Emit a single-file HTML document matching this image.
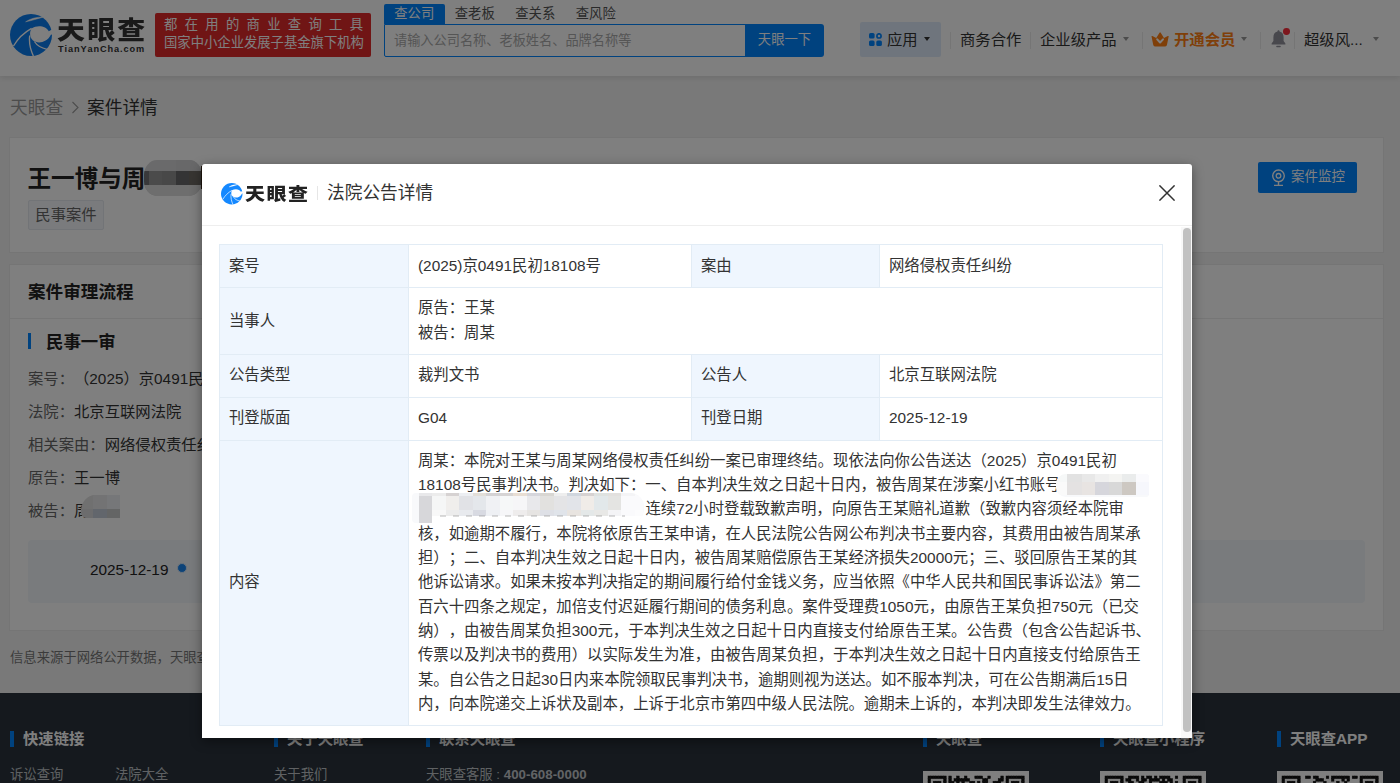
<!DOCTYPE html>
<html lang="zh-CN">
<head>
<meta charset="utf-8">
<title>案件详情 - 天眼查</title>
<style>
*{box-sizing:border-box;margin:0;padding:0}
html,body{width:1400px;height:783px;overflow:hidden;background:#f3f3f3}
body{font-family:"Liberation Sans","Noto Sans CJK SC",sans-serif;color:#333;font-size:14px;position:relative;text-spacing-trim:space-all;font-kerning:none}
.abs{position:absolute;white-space:nowrap}
/* ---------- page header ---------- */
#hd{position:absolute;left:0;top:0;width:1400px;height:76px;background:#fff;box-shadow:0 2px 6px rgba(0,0,0,.10)}
#logo-ico{position:absolute;left:10px;top:14px;width:42px;height:42px}
#logo-cn{left:57px;top:10.5px;font-size:27.5px;font-weight:900;color:#333;letter-spacing:2.2px;line-height:40px;transform:scale(1.015,.9);transform-origin:0 50%}
#logo-en{left:58px;top:42px;font-size:9.2px;font-weight:700;color:#333;letter-spacing:.9px;line-height:14px}
#banner{position:absolute;left:155px;top:13px;width:216px;height:44px;background:#e02a2a;border-radius:2px;color:#fff;font-size:13.33px;line-height:18px;padding:3px 0 0 9px;white-space:nowrap}
#banner .l1{letter-spacing:7.3px}
#tabs{position:absolute;left:384px;top:4px;height:20px;font-size:13.33px;line-height:19px;white-space:nowrap;color:#555}
#tabs span{display:inline-block;height:20px;width:60.5px;text-align:center;vertical-align:top}
#tabs .on{background:#0084ff;color:#fff;border-radius:2px 2px 0 0}
#search{position:absolute;left:384px;top:24px;width:362px;height:33px;border:1px solid #0084ff;border-radius:0 0 0 2px;font-size:13.2px;line-height:32px;color:#aaa;padding-left:9px;white-space:nowrap}
#sbtn{position:absolute;left:745px;top:24px;width:79px;height:32.5px;background:#0084ff;color:#fff;font-size:13.33px;line-height:31px;text-align:center;border-radius:0 3px 3px 0}
#app{position:absolute;left:860px;top:22px;width:81px;height:35px;background:#dfebfa;border-radius:2px}
.nav{top:30px;font-size:15.33px;line-height:20px;color:#333}
.caret{position:absolute;width:0;height:0;border-left:3.5px solid transparent;border-right:3.5px solid transparent;border-top:4px solid #666}
.vsep{position:absolute;top:32px;width:1px;height:17px;background:#eaeaea}
/* ---------- page content ---------- */
.crumb{left:10px;top:94.5px;font-size:17.7px;line-height:26px;color:#999}
.card{position:absolute;background:#fff;border:1px solid #ebebeb}
#title{left:27.5px;top:160.5px;font-size:23.6px;font-weight:700;line-height:36px;color:#222}
#tag{position:absolute;left:28px;top:200px;width:76px;height:30px;border:1px solid #e4e8ee;background:#f4f6fa;border-radius:2px;font-size:15.33px;line-height:27px;text-align:center;color:#666}
#mon{position:absolute;left:1258px;top:162px;width:99px;height:31px;background:#0084ff;border-radius:2px;color:#fff;font-size:13.5px;line-height:30px;padding-left:33px;white-space:nowrap}
.info{left:28px;font-size:15.33px;line-height:20px;color:#666}
.info b{font-weight:400;color:#333}
#tl{position:absolute;left:28px;top:540px;width:1337px;height:63px;background:#f3f6fa;border-radius:4px}
/* ---------- footer ---------- */
#ft{position:absolute;left:0;top:693px;width:1400px;height:90px;background:#2b333c}
.fh{top:729px;font-size:15.33px;font-weight:700;line-height:20px;color:#fff}
.fbar{position:absolute;top:731px;width:4px;height:16px;background:#0084ff}
.fl{top:766px;font-size:13.33px;line-height:18px;color:#bfc3c7}
/* ---------- overlay + modal ---------- */
#mask{position:absolute;left:0;top:0;width:1400px;height:783px;background:rgba(0,0,0,.5)}
#modal{position:absolute;left:202px;top:164px;width:990px;height:574px;background:#fff;border-radius:3px 3px 0 0;box-shadow:0 3px 12px rgba(0,0,0,.42)}
#mh{position:absolute;left:0;top:0;width:990px;height:62px;border-bottom:1px solid #eee}
#m-ico{position:absolute;left:19px;top:19px;width:21.5px;height:21.5px}
#m-logo{left:43px;top:16px;font-size:20px;font-weight:900;line-height:28px;color:#222;letter-spacing:1.5px;transform:scaleY(.88);transform-origin:0 50%}
#m-sep{position:absolute;left:115px;top:22px;width:1px;height:14px;background:#e6e6e6}
#m-title{left:125px;top:16px;font-size:17.7px;line-height:26px;color:#333}
#m-x{position:absolute;left:957px;top:21px;width:16px;height:16px}
#sbt{position:absolute;left:979px;top:63px;width:11px;height:511px;background:#f8f8f8}
#sb{position:absolute;left:981px;top:64px;width:7.5px;height:504px;background:#c1c1c1;border-radius:4px}
table{position:absolute;left:17px;top:80px;width:944px;border-collapse:collapse;table-layout:fixed;font-size:15.385px;color:#333;white-space:nowrap}
td{border:1px solid #e2ecf5;padding:0 9px;vertical-align:middle;line-height:24.3px}
td.k{background:#eff6fe}
.mzb{filter:blur(.45px)}
</style>
</head>
<body>

<!-- ================= header ================= -->
<div id="hd">
  <svg id="logo-ico" viewBox="0 0 42 42">
    <circle cx="21" cy="21" r="21" fill="#0a7cee"/>
    <path d="M38.7 17.2 C36.5 12.4 28 10.4 21.5 14.4 C19.4 18 19.4 23 23 26.6 C28 30.2 37 28.6 40.9 20.8 L44 20 L42 15.5 Z" fill="#fff"/>
    <path d="M15.6 7.8 C21 4.3 27 2.9 33 3.2 C27.5 4.6 22 6.6 15.6 7.8 Z" fill="#fff" stroke="#fff" stroke-width=".5"/>
    <path d="M21.6 14.3 C14 18.5 7.5 25 3.5 32" fill="none" stroke="#fff" stroke-width="1.35"/>
    <path d="M19.7 21.5 C18.8 29 20.5 36 23.4 42" fill="none" stroke="#fff" stroke-width="1.35"/>
    <path d="M24.4 27.5 C27 31.6 31 34 37 35.3" fill="none" stroke="#fff" stroke-width="1.35"/>
  </svg>
  <div class="abs" id="logo-cn">天眼查</div>
  <div class="abs" id="logo-en">TianYanCha.com</div>
  <div id="banner"><div class="l1">都在用的商业查询工具</div><div class="l2">国家中小企业发展子基金旗下机构</div></div>
  <div id="tabs"><span class="on">查公司</span><span>查老板</span><span>查关系</span><span>查风险</span></div>
  <div id="search">请输入公司名称、老板姓名、品牌名称等</div>
  <div id="sbtn">天眼一下</div>
  <div id="app"></div>
  <svg class="abs" style="left:869px;top:33px" width="13" height="13" viewBox="0 0 13 13"><rect x="0" y="0" width="5.6" height="5.6" rx="1.6" fill="#0084ff"/><circle cx="10" cy="2.9" r="2.1" fill="none" stroke="#0084ff" stroke-width="1.7"/><rect x="0" y="7.4" width="5.6" height="5.6" rx="1.6" fill="#0084ff"/><rect x="7.3" y="7.4" width="5.6" height="5.6" rx="1.6" fill="#0084ff"/></svg>
  <div class="abs nav" style="left:887px">应用</div><i class="caret" style="left:923.5px;top:37.3px;border-top-color:#333"></i>
  <div class="vsep" style="left:950px"></div>
  <div class="abs nav" style="left:960px">商务合作</div>
  <div class="vsep" style="left:1030px"></div>
  <div class="abs nav" style="left:1040px">企业级产品</div><i class="caret" style="left:1122.5px;top:37.3px;border-top-color:#999"></i>
  <div class="vsep" style="left:1142px"></div>
  <svg class="abs" style="left:1150.8px;top:32.2px" width="18" height="15" viewBox="0 0 18 15"><path d="M.6 4.8 Q.2 3.6 1.4 4.1 L5.2 5.9 L8.5 .7 Q9.1 -.1 9.7 .7 L13 5.9 L16.8 4.1 Q18 3.6 17.6 4.8 L16 12.8 Q15.7 14.6 14.2 14.6 H4 Q2.5 14.6 2.2 12.8 Z" fill="#ff7f12"/><path d="M6.2 7.3 L9.1 10.5 L12 7.3" fill="none" stroke="#fff" stroke-width="2" stroke-linecap="round" stroke-linejoin="round"/></svg>
  <div class="abs nav" style="left:1174px;color:#ff7f12;font-weight:700">开通会员</div><i class="caret" style="left:1241px;top:37.3px;border-top-color:#999"></i>
  <div class="vsep" style="left:1260px"></div>
  <svg class="abs" style="left:1270.6px;top:29.6px" width="15" height="18" viewBox="0 0 15 18"><path d="M7.5 .2 C6.7 .2 6.4 .8 6.5 1.6 C3.6 2.2 2.4 4.6 2.4 7.4 V11 L.6 13.4 V14.4 H14.4 V13.4 L12.6 11 V7.4 C12.6 4.6 11.4 2.2 8.5 1.6 C8.6 .8 8.3 .2 7.5 .2Z" fill="#90909a"/><rect x="5.2" y="15.8" width="4.6" height="1.5" rx=".7" fill="#90909a"/></svg>
  <i class="abs" style="left:1283.2px;top:28px;width:6.8px;height:6.8px;border-radius:50%;background:#fa2c3a"></i>
  <div class="vsep" style="left:1294px"></div>
  <div class="abs nav" style="left:1304px">超级风...</div><i class="caret" style="left:1372.5px;top:37.3px;border-top-color:#999"></i>
</div>

<!-- ================= page content ================= -->
<div class="abs crumb">天眼查</div>
<svg class="abs" style="left:71px;top:101px" width="9" height="13" viewBox="0 0 9 13"><path d="M1.5 1 L7 6.5 L1.5 12" fill="none" stroke="#999" stroke-width="1.1"/></svg>
<div class="abs crumb" style="left:87px;color:#333">案件详情</div>

<div class="card" style="left:9px;top:137px;width:1375px;height:116px"></div>
<div class="abs" id="title">王一博与周</div>
<div class="abs" style="left:143.5px;top:159.5px;width:58px;height:36.5px;border-radius:13px/15px;overflow:hidden;background:#d4d4d6;filter:blur(.5px)">
  <i class="abs" style="left:0;top:11.5px;width:6px;height:14px;background:#727276"></i>
  <i class="abs" style="left:5.5px;top:11.5px;width:13px;height:14px;background:#969696"></i>
  <i class="abs" style="left:18.5px;top:11.5px;width:14px;height:14px;background:#909090"></i>
  <i class="abs" style="left:32.5px;top:11.5px;width:13px;height:14px;background:#68686a"></i>
  <i class="abs" style="left:45.5px;top:11.5px;width:13px;height:14px;background:#6e6a64"></i>
  <i class="abs" style="left:0;top:25.5px;width:58px;height:11px;background:#dcdcdc"></i>
  <i class="abs" style="left:32.5px;top:0;width:26px;height:11.5px;background:#d0d0d2"></i>
</div>
<i class="abs" style="left:200.5px;top:166px;width:1px;height:23px;background:#3a2a1a"></i>
<div id="tag">民事案件</div>
<div id="mon">案件监控</div>
<svg class="abs" style="left:1271px;top:169px" width="15" height="18" viewBox="0 0 15 18"><circle cx="7.5" cy="6.8" r="5.8" fill="none" stroke="#fff" stroke-width="1.4"/><circle cx="7.5" cy="6.8" r="2.3" fill="none" stroke="#fff" stroke-width="1.3"/><path d="M3 16.4 H12 M7.5 12.8 V16.4" stroke="#fff" stroke-width="1.4" fill="none"/></svg>

<div class="card" style="left:9px;top:264px;width:1375px;height:367px"></div>
<div class="abs" style="left:28px;top:279.5px;font-size:17.6px;font-weight:700;line-height:24px;color:#222">案件审理流程</div>
<div class="abs" style="left:10px;top:318px;width:1373px;height:1px;background:#ececec"></div>
<i class="abs" style="left:28px;top:333px;width:3px;height:16px;background:#0084ff"></i>
<div class="abs" style="left:46px;top:328.5px;font-size:17.4px;font-weight:700;line-height:26px;color:#222">民事一审</div>
<div class="abs info" style="top:369px">案号：<b>（2025）京0491民初18108号</b></div>
<div class="abs info" style="top:402px">法院：<b>北京互联网法院</b></div>
<div class="abs info" style="top:435px">相关案由：<b>网络侵权责任纠纷</b></div>
<div class="abs info" style="top:468px">原告：<b>王一博</b></div>
<div class="abs info" style="top:501px">被告：<b>周</b></div>
<div class="abs" style="left:81px;top:495px;width:39px;height:23px;border-radius:14px 0 0 6px/16px 0 0 6px;overflow:hidden;background:#e0e0e0;filter:blur(.4px)">
  <i class="abs" style="left:12px;top:0;width:14px;height:14px;background:#e6e6e8"></i>
  <i class="abs" style="left:26px;top:0;width:13px;height:14px;background:#eceef2"></i>
  <i class="abs" style="left:0;top:14px;width:12px;height:9px;background:#d8d8da"></i>
  <i class="abs" style="left:12px;top:14px;width:14px;height:9px;background:#c4ccd8"></i>
  <i class="abs" style="left:26px;top:14px;width:13px;height:9px;background:#c8caca"></i>
</div>
<div id="tl"></div>
<div class="abs" style="left:90px;top:559.5px;font-size:15.33px;line-height:20px;color:#222">2025-12-19</div>
<i class="abs" style="left:176.5px;top:563px;width:10px;height:10px;border-radius:50%;background:#1a86f0;border:1.5px solid #d6e6f8"></i>
<div class="abs" style="left:10px;top:648.5px;font-size:13.33px;line-height:18px;color:#777">信息来源于网络公开数据，天眼查仅作展示</div>

<!-- ================= footer ================= -->
<div id="ft"></div>
<i class="fbar" style="left:10px"></i><div class="abs fh" style="left:23px">快速链接</div>
<i class="fbar" style="left:274px"></i><div class="abs fh" style="left:287px">关于天眼查</div>
<i class="fbar" style="left:426px"></i><div class="abs fh" style="left:439px">联系天眼查</div>
<i class="fbar" style="left:923px"></i><div class="abs fh" style="left:936px">天眼查</div>
<i class="fbar" style="left:1100px"></i><div class="abs fh" style="left:1113px">天眼查小程序</div>
<i class="fbar" style="left:1277px"></i><div class="abs fh" style="left:1290px">天眼查APP</div>
<div class="abs fl" style="left:10px">诉讼查询</div>
<div class="abs fl" style="left:115px">法院大全</div>
<div class="abs fl" style="left:274px">关于我们</div>
<div class="abs fl" style="left:426px">天眼查客服 : <b style="color:#c4c8cc">400-608-0000</b></div>

<svg class="abs" style="left:923px;top:771px" width="106" height="12" viewBox="0 0 106 12"><rect width="106" height="12" fill="#fff"/><g fill="#111" stroke="#111" stroke-width=".5"><rect x="5.0" y="5.0" width="2.6" height="2.6"/><rect x="7.6" y="5.0" width="2.6" height="2.6"/><rect x="10.2" y="5.0" width="2.6" height="2.6"/><rect x="12.8" y="5.0" width="2.6" height="2.6"/><rect x="15.4" y="5.0" width="2.6" height="2.6"/><rect x="18.0" y="5.0" width="2.6" height="2.6"/><rect x="20.6" y="5.0" width="2.6" height="2.6"/><rect x="5.0" y="7.6" width="2.6" height="2.6"/><rect x="20.6" y="7.6" width="2.6" height="2.6"/><rect x="5.0" y="10.2" width="2.6" height="1.9"/><rect x="10.2" y="10.2" width="2.6" height="1.9"/><rect x="12.8" y="10.2" width="2.6" height="1.9"/><rect x="15.4" y="10.2" width="2.6" height="1.9"/><rect x="20.6" y="10.2" width="2.6" height="1.9"/><rect x="83.0" y="5.0" width="2.6" height="2.6"/><rect x="85.6" y="5.0" width="2.6" height="2.6"/><rect x="88.2" y="5.0" width="2.6" height="2.6"/><rect x="90.8" y="5.0" width="2.6" height="2.6"/><rect x="93.4" y="5.0" width="2.6" height="2.6"/><rect x="96.0" y="5.0" width="2.6" height="2.6"/><rect x="98.6" y="5.0" width="2.6" height="2.6"/><rect x="83.0" y="7.6" width="2.6" height="2.6"/><rect x="98.6" y="7.6" width="2.6" height="2.6"/><rect x="83.0" y="10.2" width="2.6" height="1.9"/><rect x="88.2" y="10.2" width="2.6" height="1.9"/><rect x="90.8" y="10.2" width="2.6" height="1.9"/><rect x="93.4" y="10.2" width="2.6" height="1.9"/><rect x="98.6" y="10.2" width="2.6" height="1.9"/><rect x="25.8" y="5.0" width="2.6" height="2.6"/><rect x="33.6" y="5.0" width="2.6" height="2.6"/><rect x="41.4" y="5.0" width="2.6" height="2.6"/><rect x="51.8" y="5.0" width="2.6" height="2.6"/><rect x="54.4" y="5.0" width="2.6" height="2.6"/><rect x="57.0" y="5.0" width="2.6" height="2.6"/><rect x="64.8" y="5.0" width="2.6" height="2.6"/><rect x="77.8" y="5.0" width="2.6" height="2.6"/><rect x="25.8" y="7.6" width="2.6" height="2.6"/><rect x="31.0" y="7.6" width="2.6" height="2.6"/><rect x="33.6" y="7.6" width="2.6" height="2.6"/><rect x="36.2" y="7.6" width="2.6" height="2.6"/><rect x="38.8" y="7.6" width="2.6" height="2.6"/><rect x="41.4" y="7.6" width="2.6" height="2.6"/><rect x="44.0" y="7.6" width="2.6" height="2.6"/><rect x="59.6" y="7.6" width="2.6" height="2.6"/><rect x="62.2" y="7.6" width="2.6" height="2.6"/><rect x="75.2" y="7.6" width="2.6" height="2.6"/><rect x="77.8" y="7.6" width="2.6" height="2.6"/><rect x="25.8" y="10.2" width="2.6" height="1.9"/><rect x="28.4" y="10.2" width="2.6" height="1.9"/><rect x="33.6" y="10.2" width="2.6" height="1.9"/><rect x="38.8" y="10.2" width="2.6" height="1.9"/><rect x="46.6" y="10.2" width="2.6" height="1.9"/><rect x="49.2" y="10.2" width="2.6" height="1.9"/><rect x="54.4" y="10.2" width="2.6" height="1.9"/><rect x="59.6" y="10.2" width="2.6" height="1.9"/><rect x="62.2" y="10.2" width="2.6" height="1.9"/><rect x="70.0" y="10.2" width="2.6" height="1.9"/><rect x="72.6" y="10.2" width="2.6" height="1.9"/><rect x="75.2" y="10.2" width="2.6" height="1.9"/></g></svg>
<svg class="abs" style="left:1100px;top:771px" width="106" height="12" viewBox="0 0 106 12"><rect width="106" height="12" fill="#fff"/><g fill="#111" stroke="#111" stroke-width=".5"><rect x="5.0" y="5.0" width="2.6" height="2.6"/><rect x="7.6" y="5.0" width="2.6" height="2.6"/><rect x="10.2" y="5.0" width="2.6" height="2.6"/><rect x="12.8" y="5.0" width="2.6" height="2.6"/><rect x="15.4" y="5.0" width="2.6" height="2.6"/><rect x="18.0" y="5.0" width="2.6" height="2.6"/><rect x="20.6" y="5.0" width="2.6" height="2.6"/><rect x="5.0" y="7.6" width="2.6" height="2.6"/><rect x="20.6" y="7.6" width="2.6" height="2.6"/><rect x="5.0" y="10.2" width="2.6" height="1.9"/><rect x="10.2" y="10.2" width="2.6" height="1.9"/><rect x="12.8" y="10.2" width="2.6" height="1.9"/><rect x="15.4" y="10.2" width="2.6" height="1.9"/><rect x="20.6" y="10.2" width="2.6" height="1.9"/><rect x="83.0" y="5.0" width="2.6" height="2.6"/><rect x="85.6" y="5.0" width="2.6" height="2.6"/><rect x="88.2" y="5.0" width="2.6" height="2.6"/><rect x="90.8" y="5.0" width="2.6" height="2.6"/><rect x="93.4" y="5.0" width="2.6" height="2.6"/><rect x="96.0" y="5.0" width="2.6" height="2.6"/><rect x="98.6" y="5.0" width="2.6" height="2.6"/><rect x="83.0" y="7.6" width="2.6" height="2.6"/><rect x="98.6" y="7.6" width="2.6" height="2.6"/><rect x="83.0" y="10.2" width="2.6" height="1.9"/><rect x="88.2" y="10.2" width="2.6" height="1.9"/><rect x="90.8" y="10.2" width="2.6" height="1.9"/><rect x="93.4" y="10.2" width="2.6" height="1.9"/><rect x="98.6" y="10.2" width="2.6" height="1.9"/><rect x="28.4" y="5.0" width="2.6" height="2.6"/><rect x="31.0" y="5.0" width="2.6" height="2.6"/><rect x="33.6" y="5.0" width="2.6" height="2.6"/><rect x="36.2" y="5.0" width="2.6" height="2.6"/><rect x="41.4" y="5.0" width="2.6" height="2.6"/><rect x="46.6" y="5.0" width="2.6" height="2.6"/><rect x="49.2" y="5.0" width="2.6" height="2.6"/><rect x="54.4" y="5.0" width="2.6" height="2.6"/><rect x="59.6" y="5.0" width="2.6" height="2.6"/><rect x="62.2" y="5.0" width="2.6" height="2.6"/><rect x="64.8" y="5.0" width="2.6" height="2.6"/><rect x="67.4" y="5.0" width="2.6" height="2.6"/><rect x="75.2" y="5.0" width="2.6" height="2.6"/><rect x="25.8" y="7.6" width="2.6" height="2.6"/><rect x="28.4" y="7.6" width="2.6" height="2.6"/><rect x="36.2" y="7.6" width="2.6" height="2.6"/><rect x="41.4" y="7.6" width="2.6" height="2.6"/><rect x="44.0" y="7.6" width="2.6" height="2.6"/><rect x="49.2" y="7.6" width="2.6" height="2.6"/><rect x="51.8" y="7.6" width="2.6" height="2.6"/><rect x="54.4" y="7.6" width="2.6" height="2.6"/><rect x="57.0" y="7.6" width="2.6" height="2.6"/><rect x="62.2" y="7.6" width="2.6" height="2.6"/><rect x="67.4" y="7.6" width="2.6" height="2.6"/><rect x="70.0" y="7.6" width="2.6" height="2.6"/><rect x="28.4" y="10.2" width="2.6" height="1.9"/><rect x="31.0" y="10.2" width="2.6" height="1.9"/><rect x="38.8" y="10.2" width="2.6" height="1.9"/><rect x="41.4" y="10.2" width="2.6" height="1.9"/><rect x="49.2" y="10.2" width="2.6" height="1.9"/><rect x="59.6" y="10.2" width="2.6" height="1.9"/><rect x="62.2" y="10.2" width="2.6" height="1.9"/><rect x="64.8" y="10.2" width="2.6" height="1.9"/><rect x="70.0" y="10.2" width="2.6" height="1.9"/><rect x="75.2" y="10.2" width="2.6" height="1.9"/></g></svg>
<svg class="abs" style="left:1277px;top:771px" width="106" height="12" viewBox="0 0 106 12"><rect width="106" height="12" fill="#fff"/><g fill="#111" stroke="#111" stroke-width=".5"><rect x="5.0" y="5.0" width="2.6" height="2.6"/><rect x="7.6" y="5.0" width="2.6" height="2.6"/><rect x="10.2" y="5.0" width="2.6" height="2.6"/><rect x="12.8" y="5.0" width="2.6" height="2.6"/><rect x="15.4" y="5.0" width="2.6" height="2.6"/><rect x="18.0" y="5.0" width="2.6" height="2.6"/><rect x="20.6" y="5.0" width="2.6" height="2.6"/><rect x="5.0" y="7.6" width="2.6" height="2.6"/><rect x="20.6" y="7.6" width="2.6" height="2.6"/><rect x="5.0" y="10.2" width="2.6" height="1.9"/><rect x="10.2" y="10.2" width="2.6" height="1.9"/><rect x="12.8" y="10.2" width="2.6" height="1.9"/><rect x="15.4" y="10.2" width="2.6" height="1.9"/><rect x="20.6" y="10.2" width="2.6" height="1.9"/><rect x="83.0" y="5.0" width="2.6" height="2.6"/><rect x="85.6" y="5.0" width="2.6" height="2.6"/><rect x="88.2" y="5.0" width="2.6" height="2.6"/><rect x="90.8" y="5.0" width="2.6" height="2.6"/><rect x="93.4" y="5.0" width="2.6" height="2.6"/><rect x="96.0" y="5.0" width="2.6" height="2.6"/><rect x="98.6" y="5.0" width="2.6" height="2.6"/><rect x="83.0" y="7.6" width="2.6" height="2.6"/><rect x="98.6" y="7.6" width="2.6" height="2.6"/><rect x="83.0" y="10.2" width="2.6" height="1.9"/><rect x="88.2" y="10.2" width="2.6" height="1.9"/><rect x="90.8" y="10.2" width="2.6" height="1.9"/><rect x="93.4" y="10.2" width="2.6" height="1.9"/><rect x="98.6" y="10.2" width="2.6" height="1.9"/><rect x="28.4" y="5.0" width="2.6" height="2.6"/><rect x="31.0" y="5.0" width="2.6" height="2.6"/><rect x="36.2" y="5.0" width="2.6" height="2.6"/><rect x="38.8" y="5.0" width="2.6" height="2.6"/><rect x="49.2" y="5.0" width="2.6" height="2.6"/><rect x="54.4" y="5.0" width="2.6" height="2.6"/><rect x="57.0" y="5.0" width="2.6" height="2.6"/><rect x="59.6" y="5.0" width="2.6" height="2.6"/><rect x="62.2" y="5.0" width="2.6" height="2.6"/><rect x="64.8" y="5.0" width="2.6" height="2.6"/><rect x="67.4" y="5.0" width="2.6" height="2.6"/><rect x="70.0" y="5.0" width="2.6" height="2.6"/><rect x="75.2" y="5.0" width="2.6" height="2.6"/><rect x="77.8" y="5.0" width="2.6" height="2.6"/><rect x="38.8" y="7.6" width="2.6" height="2.6"/><rect x="41.4" y="7.6" width="2.6" height="2.6"/><rect x="44.0" y="7.6" width="2.6" height="2.6"/><rect x="54.4" y="7.6" width="2.6" height="2.6"/><rect x="64.8" y="7.6" width="2.6" height="2.6"/><rect x="70.0" y="7.6" width="2.6" height="2.6"/><rect x="36.2" y="10.2" width="2.6" height="1.9"/><rect x="46.6" y="10.2" width="2.6" height="1.9"/><rect x="59.6" y="10.2" width="2.6" height="1.9"/><rect x="67.4" y="10.2" width="2.6" height="1.9"/></g></svg>

<!-- ================= overlay + modal ================= -->
<div id="mask"></div>
<div id="modal">
  <div id="mh">
    <svg id="m-ico" viewBox="0 0 42 42">
    <circle cx="21" cy="21" r="21" fill="#1488ff"/>
    <path d="M38.7 17.2 C36.5 12.4 28 10.4 21.5 14.4 C19.4 18 19.4 23 23 26.6 C28 30.2 37 28.6 40.9 20.8 L44 20 L42 15.5 Z" fill="#fff"/>
    <path d="M15.6 7.8 C21 4.3 27 2.9 33 3.2 C27.5 4.6 22 6.6 15.6 7.8 Z" fill="#fff" stroke="#fff" stroke-width=".5"/>
    <path d="M21.6 14.3 C14 18.5 7.5 25 3.5 32" fill="none" stroke="#fff" stroke-width="1.35"/>
    <path d="M19.7 21.5 C18.8 29 20.5 36 23.4 42" fill="none" stroke="#fff" stroke-width="1.35"/>
    <path d="M24.4 27.5 C27 31.6 31 34 37 35.3" fill="none" stroke="#fff" stroke-width="1.35"/>
  </svg>
    <div class="abs" id="m-logo">天眼查</div>
    <i id="m-sep"></i>
    <div class="abs" id="m-title">法院公告详情</div>
    <svg id="m-x" viewBox="0 0 16 16"><path d="M.4 .4 L15.6 15.6 M15.6 .4 L.4 15.6" stroke="#333" stroke-width="1.5" fill="none"/></svg>
  </div>
  <div id="sbt"></div><div id="sb"></div>
  <table>
    <colgroup><col style="width:189px"><col style="width:283px"><col style="width:188px"><col style="width:283px"></colgroup>
    <tr style="height:43px"><td class="k">案号</td><td>(2025)京0491民初18108号</td><td class="k">案由</td><td>网络侵权责任纠纷</td></tr>
    <tr style="height:66.5px"><td class="k">当事人</td><td colspan="3">原告：王某<br>被告：周某</td></tr>
    <tr style="height:43px"><td class="k">公告类型</td><td>裁判文书</td><td class="k">公告人</td><td>北京互联网法院</td></tr>
    <tr style="height:43px"><td class="k">刊登版面</td><td>G04</td><td class="k">刊登日期</td><td>2025-12-19</td></tr>
    <tr style="height:285px"><td class="k">内容</td><td colspan="3" id="ct">周某：本院对王某与周某网络侵权责任纠纷一案已审理终结。现依法向你公告送达（2025）京0491民初<br>18108号民事判决书。判决如下：一、自本判决生效之日起十日内，被告周某在涉案小红书账号<br><span style="display:inline-block;width:227.5px"></span>连续72小时登载致歉声明，向原告王某赔礼道歉（致歉内容须经本院审<br>核，如逾期不履行，本院将依原告王某申请，在人民法院公告网公布判决书主要内容，其费用由被告周某承<br>担）；二、自本判决生效之日起十日内，被告周某赔偿原告王某经济损失20000元；三、驳回原告王某的其<br>他诉讼请求。如果未按本判决指定的期间履行给付金钱义务，应当依照《中华人民共和国民事诉讼法》第二<br>百六十四条之规定，加倍支付迟延履行期间的债务利息。案件受理费1050元，由原告王某负担750元（已交<br>纳），由被告周某负担300元，于本判决生效之日起十日内直接支付给原告王某。公告费（包含公告起诉书、<br>传票以及判决书的费用）以实际发生为准，由被告周某负担，于本判决生效之日起十日内直接支付给原告王<br>某。自公告之日起30日内来本院领取民事判决书，逾期则视为送达。如不服本判决，可在公告期满后15日<br>内，向本院递交上诉状及副本，上诉于北京市第四中级人民法院。逾期未上诉的，本判决即发生法律效力。</td></tr>
  </table>
  <div class="abs mzb" style="left:210.0px;top:328.5px;width:231.5px;height:30px;border-radius:4px 14px 14px 4px;overflow:hidden;background:#f8f9fb">
  <i class="abs" style="left:7.3px;top:0;width:12.8px;height:3px;background:#e8e8ea"></i>
  <i class="abs" style="left:7.3px;top:3px;width:12.8px;height:14px;background:#d7d7da"></i>
  <i class="abs" style="left:7.3px;top:17px;width:12.8px;height:13px;background:#d7d7da"></i>
  <i class="abs" style="left:19.8px;top:0;width:14.2px;height:3px;background:#ececec"></i>
  <i class="abs" style="left:19.8px;top:3px;width:14.2px;height:14px;background:#f5f6f6"></i>
  <i class="abs" style="left:19.8px;top:17px;width:14.2px;height:6px;background:#f8f8f8"></i>
  <i class="abs" style="left:33.7px;top:0;width:13.6px;height:3px;background:#d6d2d2"></i>
  <i class="abs" style="left:33.7px;top:3px;width:13.6px;height:14px;background:#f0eeec"></i>
  <i class="abs" style="left:33.7px;top:17px;width:13.6px;height:6px;background:#ececec"></i>
  <i class="abs" style="left:47.0px;top:0;width:14.2px;height:3px;background:#eceef2"></i>
  <i class="abs" style="left:47.0px;top:3px;width:14.2px;height:14px;background:#e1e2e6"></i>
  <i class="abs" style="left:47.0px;top:17px;width:14.2px;height:6px;background:#e8eaee"></i>
  <i class="abs" style="left:60.9px;top:0;width:13.4px;height:3px;background:#e2ded8"></i>
  <i class="abs" style="left:60.9px;top:3px;width:13.4px;height:14px;background:#e4e7eb"></i>
  <i class="abs" style="left:60.9px;top:17px;width:13.4px;height:6px;background:#d8dae2"></i>
  <i class="abs" style="left:74.0px;top:0;width:13.9px;height:3px;background:#d4d2d4"></i>
  <i class="abs" style="left:74.0px;top:3px;width:13.9px;height:14px;background:#f0f1f4"></i>
  <i class="abs" style="left:74.0px;top:17px;width:13.9px;height:6px;background:#eef0f4"></i>
  <i class="abs" style="left:87.6px;top:0;width:13.7px;height:3px;background:#d6d4d4"></i>
  <i class="abs" style="left:87.6px;top:3px;width:13.7px;height:14px;background:#f6f8f8"></i>
  <i class="abs" style="left:87.6px;top:17px;width:13.7px;height:6px;background:#f6f6f8"></i>
  <i class="abs" style="left:101.0px;top:0;width:14.3px;height:3px;background:#e8ded4"></i>
  <i class="abs" style="left:101.0px;top:3px;width:14.3px;height:14px;background:#f6f6f8"></i>
  <i class="abs" style="left:101.0px;top:17px;width:14.3px;height:6px;background:#eeecec"></i>
  <i class="abs" style="left:115.0px;top:0;width:13.3px;height:3px;background:#d6d6dc"></i>
  <i class="abs" style="left:115.0px;top:3px;width:13.3px;height:14px;background:#e8e8eb"></i>
  <i class="abs" style="left:115.0px;top:17px;width:13.3px;height:6px;background:#e6e4e2"></i>
  <i class="abs" style="left:128.0px;top:0;width:13.9px;height:3px;background:#d8d6d2"></i>
  <i class="abs" style="left:128.0px;top:3px;width:13.9px;height:14px;background:#e2e1df"></i>
  <i class="abs" style="left:128.0px;top:17px;width:13.9px;height:6px;background:#dee0e6"></i>
  <i class="abs" style="left:141.6px;top:0;width:13.7px;height:3px;background:#eeeeee"></i>
  <i class="abs" style="left:141.6px;top:3px;width:13.7px;height:14px;background:#e4e4e6"></i>
  <i class="abs" style="left:141.6px;top:17px;width:13.7px;height:6px;background:#e0e4ea"></i>
  <i class="abs" style="left:155.0px;top:0;width:13.8px;height:3px;background:#d0d6de"></i>
  <i class="abs" style="left:155.0px;top:3px;width:13.8px;height:14px;background:#e2e4e9"></i>
  <i class="abs" style="left:155.0px;top:17px;width:13.8px;height:6px;background:#e8e4e0"></i>
  <i class="abs" style="left:168.5px;top:0;width:13.8px;height:3px;background:#d6d2d2"></i>
  <i class="abs" style="left:168.5px;top:3px;width:13.8px;height:14px;background:#f0ece8"></i>
  <i class="abs" style="left:168.5px;top:17px;width:13.8px;height:6px;background:#e4e8e8"></i>
  <i class="abs" style="left:182.0px;top:0;width:14.3px;height:3px;background:#dee2e0"></i>
  <i class="abs" style="left:182.0px;top:3px;width:14.3px;height:14px;background:#e2e8ea"></i>
  <i class="abs" style="left:182.0px;top:17px;width:14.3px;height:6px;background:#e8e8e6"></i>
  <i class="abs" style="left:196.0px;top:0;width:13.3px;height:3px;background:#e2e0de"></i>
  <i class="abs" style="left:196.0px;top:3px;width:13.3px;height:14px;background:#e4e4e2"></i>
  <i class="abs" style="left:196.0px;top:17px;width:13.3px;height:6px;background:#f4f4f6"></i>
  <i class="abs" style="left:209.0px;top:0;width:14.3px;height:3px;background:#f4f4f6"></i>
  <i class="abs" style="left:209.0px;top:3px;width:14.3px;height:14px;background:#fafafc"></i>
  <i class="abs" style="left:209.0px;top:17px;width:14.3px;height:6px;background:#fafafc"></i>
  <i class="abs" style="left:223.0px;top:0;width:8.3px;height:3px;background:#fafafc"></i>
  <i class="abs" style="left:223.0px;top:3px;width:8.3px;height:14px;background:#fafafc"></i>
  <i class="abs" style="left:223.0px;top:17px;width:8.3px;height:6px;background:#fcfcfd"></i>
  <i class="abs" style="left:20px;top:23px;width:218px;height:7px;background:#fff"></i>
  </div>
  <div class="abs" style="left:238.0px;top:350.5px;width:185px;height:2px;background:repeating-linear-gradient(90deg,#8a8a8a 0 6px,transparent 6px 13px);opacity:.3;filter:blur(.7px)"></div>
  <div class="abs mzb" style="left:854.0px;top:310.0px;width:92.8px;height:23px;border-radius:10px 3px 3px 10px;overflow:hidden;background:#f8f9fb">
  <i class="abs" style="left:0.0px;top:0;width:11.4px;height:8px;background:#f6f8f8"></i>
  <i class="abs" style="left:0.0px;top:8px;width:11.4px;height:13px;background:#fafafa"></i>
  <i class="abs" style="left:11.1px;top:0;width:15.2px;height:8px;background:#e2e2e2"></i>
  <i class="abs" style="left:11.1px;top:8px;width:15.2px;height:13px;background:#e4e2e2"></i>
  <i class="abs" style="left:26.0px;top:0;width:13.3px;height:8px;background:#e8e8e8"></i>
  <i class="abs" style="left:26.0px;top:8px;width:13.3px;height:13px;background:#e8e4e2"></i>
  <i class="abs" style="left:39.0px;top:0;width:14.4px;height:8px;background:#f0f0f0"></i>
  <i class="abs" style="left:39.0px;top:8px;width:14.4px;height:13px;background:#d6d6dc"></i>
  <i class="abs" style="left:53.1px;top:0;width:13.1px;height:8px;background:#f4f4f2"></i>
  <i class="abs" style="left:53.1px;top:8px;width:13.1px;height:13px;background:#d8d8d8"></i>
  <i class="abs" style="left:65.9px;top:0;width:14.2px;height:8px;background:#eaecec"></i>
  <i class="abs" style="left:65.9px;top:8px;width:14.2px;height:13px;background:#cdc8c2"></i>
  <i class="abs" style="left:79.8px;top:0;width:13.3px;height:8px;background:#fafafd"></i>
  <i class="abs" style="left:79.8px;top:8px;width:13.3px;height:13px;background:#f6f7fc"></i>
  </div>
</div>

</body>
</html>
